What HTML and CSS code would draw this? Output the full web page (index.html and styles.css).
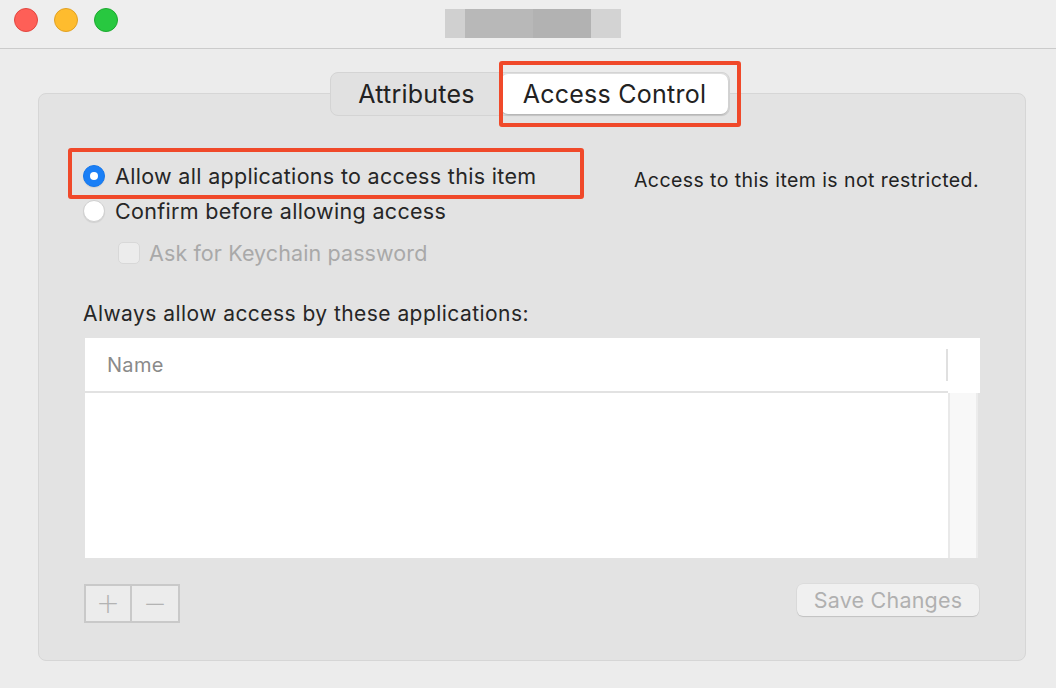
FILE: index.html
```html
<!DOCTYPE html>
<html lang="en">
<head>
    <meta charset="UTF-8">
    <title>Access Control</title>
    <link rel="stylesheet" href="styles.css">
</head>
<body>
<div class="window">
    <div class="titlebar">
        <div class="lights">
            <span class="light red"></span>
            <span class="light yellow"></span>
            <span class="light green"></span>
        </div>
        <!-- pixelated window title -->
        <div class="title-blur">
            <span class="b1"></span><span class="b2"></span><span class="b3"></span><span class="b4"></span>
        </div>
    </div>

    <div class="main">
        <div class="panel">
            <div class="tabs">
                <div class="tab">Attributes</div>
                <div class="tab selected">Access Control</div>
            </div>

            <div class="top">
                <div class="options">
                    <div class="option">
                        <span class="radio on"></span>
                        <span>Allow all applications to access this item</span>
                    </div>
                    <div class="option">
                        <span class="radio"></span>
                        <span>Confirm before allowing access</span>
                    </div>
                    <div class="option sub disabled">
                        <span class="checkbox"></span>
                        <span>Ask for Keychain password</span>
                    </div>
                </div>
                <p class="note">Access to this item is not restricted.</p>
            </div>

            <p class="list-label">Always allow access by these applications:</p>

            <div class="table">
                <div class="table-head">
                    <span class="col-name">Name</span>
                    <span class="col-sep"></span>
                </div>
                <div class="table-body">
                    <div class="rows"></div>
                    <div class="scroller"></div>
                </div>
            </div>

            <div class="bottom">
                <div class="pm">
                    <button class="pm-btn">+</button>
                    <button class="pm-btn">&minus;</button>
                </div>
                <button class="save-btn">Save Changes</button>
            </div>
        </div>
    </div>

    <!-- red annotation boxes -->
    <div class="mark mark-tab"></div>
    <div class="mark mark-option"></div>
</div>
</body>
</html>
```

FILE: styles.css
```css
* {
    box-sizing: border-box;
}

body {
    margin: 0;
    font-family: Inter, "Noto Sans", sans-serif;
    color: #262626;
    background: #ececec;
}

.window {
    position: relative;
    width: 1056px;
    height: 688px;
    background: #ececec;
    overflow: hidden;
}

.titlebar {
    display: flex;
    align-items: center;
    height: 49px;
    background: #eeeeee;
    border-bottom: 1px solid #cbcbcb;
    position: relative;
}

.lights {
    display: flex;
    gap: 16px;
    padding-left: 14px;
    margin-top: -8px;
}

.light {
    width: 24px;
    height: 24px;
    border-radius: 50%;
}
.red    { background: #fe5f57; border: 1px solid #e2463f; }
.yellow { background: #febc2e; border: 1px solid #e1a123; }
.green  { background: #28c840; border: 1px solid #1ca92f; }

.title-blur {
    display: flex;
    height: 29px;
    margin-left: 327px;
    margin-top: -2px;
}
.title-blur span { display: block; height: 100%; }
.b1 { width: 20px; background: #d0d0d0; }
.b2 { width: 68px; background: #b8b8b8; }
.b3 { width: 58px; background: #b2b2b2; }
.b4 { width: 30px; background: #d3d3d3; }

.main {
    padding: 44px 30px 0 38px;
}

.panel {
    width: 988px;
    height: 568px;
    background: #e3e3e3;
    border: 1px solid #d6d6d6;
    border-radius: 8px;
    padding: 0 46px 0 44px;
    display: flex;
    flex-direction: column;
}

/* segmented control */
.tabs {
    align-self: center;
    display: flex;
    margin-top: -22px;
    margin-left: -2px;
    height: 44px;
    padding: 1px;
    background: #e1e1e1;
    border: 1px solid #d4d4d4;
    border-radius: 8px;
}
.tab {
    display: flex;
    align-items: center;
    justify-content: center;
    font-size: 25px;
    letter-spacing: 0.25px;
    color: #222;
    width: 169px;
}
.tab.selected {
    width: 227px;
    background: white;
    border-radius: 7px;
    box-shadow: 0 1px 2px rgba(0, 0, 0, 0.25);
}

.top {
    display: flex;
    justify-content: space-between;
    margin-top: 42px;
}
.options {
    display: flex;
    flex-direction: column;
}
.option {
    display: flex;
    align-items: center;
    gap: 10px;
    height: 35px;
    font-size: 21.5px;
    letter-spacing: 0.32px;
}
.option.sub {
    margin-top: 7px;
    padding-left: 35px;
    gap: 9px;
    letter-spacing: 0.1px;
}
.option.disabled {
    color: #a9a9a9;
}

.radio {
    width: 22px;
    height: 22px;
    border-radius: 50%;
    background: white;
    border: 1px solid #d0d0d0;
    box-shadow: 0 1px 1px rgba(0, 0, 0, 0.08);
    display: flex;
    align-items: center;
    justify-content: center;
}
.radio.on {
    background: #1a7ff6;
    border-color: #1577eb;
}
.radio.on::after {
    content: "";
    width: 8px;
    height: 8px;
    border-radius: 50%;
    background: white;
}

.checkbox {
    width: 22px;
    height: 22px;
    border-radius: 5px;
    background: #ececec;
    border: 1px solid #d8d8d8;
}

.note {
    margin: 10px 0 0;
    font-size: 19.5px;
    letter-spacing: 0.42px;
    color: #222;
}

.list-label {
    margin: 31px 0 0;
    font-size: 21px;
    letter-spacing: 0.45px;
    color: #262626;
    padding-left: 0;
}

.table {
    margin-top: 12px;
    margin-left: 2px;
    width: 895px;
    background: white;
}
.table-head {
    display: flex;
    align-items: center;
    height: 55px;
    border-bottom: 2px solid #e2e2e2;
    margin-right: 32px;
}
.col-name {
    flex: 1;
    padding-left: 22px;
    font-size: 20px;
    letter-spacing: 0.3px;
    color: #8a8a8a;
}
.col-sep {
    width: 2px;
    height: 32px;
    background: #e0e0e0;
}
.table-body {
    display: flex;
    height: 165px;
    background: #e3e3e3;
}
.rows {
    width: 863px;
    background: white;
}
.scroller {
    width: 30px;
    background: #f8f8f8;
    border-left: 2px solid #e9e9e9;
    border-right: 2px solid #ececec;
}

.bottom {
    display: flex;
    justify-content: space-between;
    align-items: flex-start;
    margin-top: 26px;
}
.pm {
    display: flex;
    margin-left: 1px;
}
.pm-btn {
    width: 48px;
    height: 39px;
    background: #ececec;
    border: 2px solid #c9c9c9;
    color: #b3b3b3;
    font-family: "DejaVu Sans", sans-serif;
    font-size: 28px;
    font-weight: 200;
    line-height: 1;
    padding: 0;
}
.pm-btn + .pm-btn {
    border-left: none;
}

.save-btn {
    width: 182px;
    height: 32px;
    background: #f0f0f0;
    border: none;
    border-radius: 6px;
    box-shadow: 0 1px 1px rgba(0, 0, 0, 0.12), 0 0 0 0.5px rgba(0, 0, 0, 0.06);
    color: #b0b0b0;
    font-family: Inter, sans-serif;
    font-size: 21.5px;
    letter-spacing: 0.2px;
    padding: 0;
}

/* annotations drawn on top of the screenshot */
.mark {
    position: absolute;
    border: 4px solid #f0492a;
    border-radius: 3px;
}
.mark-tab {
    left: 499px;
    top: 61px;
    width: 242px;
    height: 66px;
}
.mark-option {
    left: 68px;
    top: 148px;
    width: 516px;
    height: 51px;
}
```
